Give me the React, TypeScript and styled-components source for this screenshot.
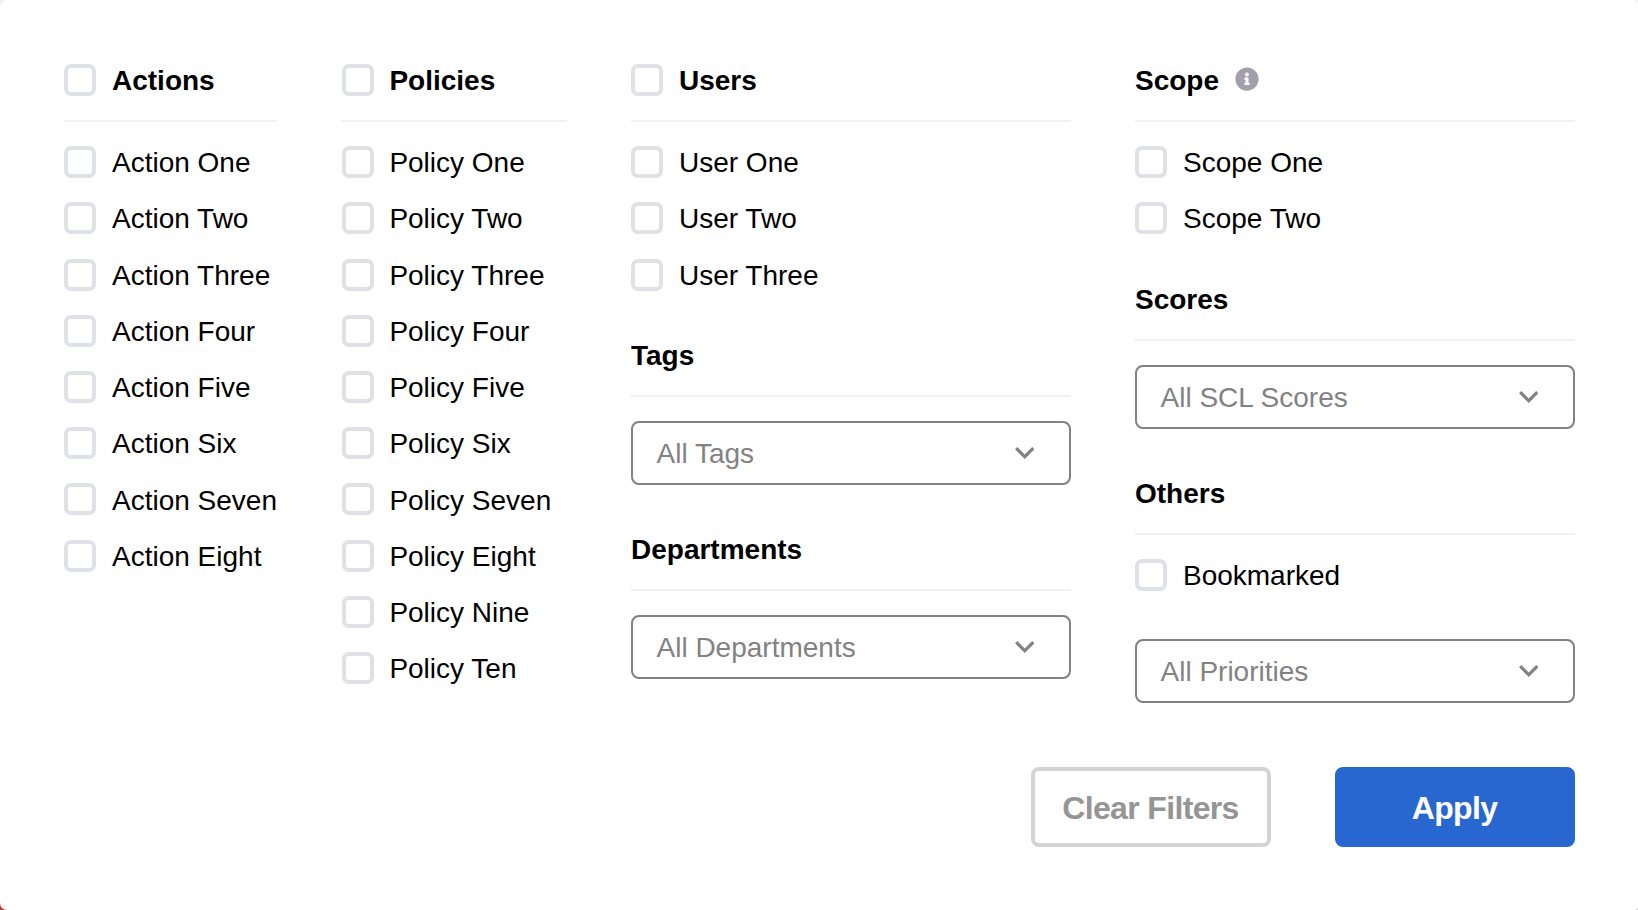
import React from "react";
import styled, { createGlobalStyle } from "styled-components";
import { FaInfoCircle } from "react-icons/fa";

const GlobalStyle = createGlobalStyle`
  *, *::before, *::after { box-sizing: border-box; }
  body {
    margin: 0;
    font-family: "Liberation Sans", Helvetica, Arial, sans-serif;
    color: #000;
    overflow: hidden;
  }
`;

const Backdrop = styled.div`
  height: 910px;
  background:
    linear-gradient(#c8403a, #c8403a) left bottom / 20px 20px no-repeat,
    linear-gradient(#c8c8c8, #c8c8c8) right bottom / 20px 20px no-repeat,
    #f0f0f0;
`;

const Panel = styled.main`
  display: flex;
  flex-direction: column;
  justify-content: space-between;
  height: 100%;
  padding: 64px 63px 63px 64px;
  background: #fff;
  border-radius: 8px 5px 4px 7px;
`;

const Columns = styled.div`
  display: grid;
  grid-template-columns: 213.4px 225.6px 440px 440px;
  column-gap: 64px;
  align-items: start;
`;

const Column = styled.div`
  display: flex;
  flex-direction: column;
  gap: 48px;
`;

const Group = styled.section`
  display: flex;
  flex-direction: column;
  gap: 24px;
`;

const GroupHeader = styled.header`
  display: flex;
  align-items: center;
  height: 58.1px;
  padding-bottom: 24px;
  border-bottom: 2px solid #f1f1f2;
`;

const Title = styled.h2`
  margin: 0;
  padding-top: 2px;
  font-size: 28px;
  line-height: 30px;
  font-weight: 700;
`;

const InfoIcon = styled(FaInfoCircle)`
  width: 24px;
  height: 24px;
  margin: -2px 0 0 16px;
  color: #a29eab;
`;

const Row = styled.label`
  display: flex;
  align-items: center;
  height: 32.22px;
  font-size: 28px;
  line-height: 30px;
  white-space: nowrap;
`;

const Label = styled.span`
  padding-top: 2px;
`;

const Checkbox = styled.input.attrs({ type: "checkbox" })`
  appearance: none;
  flex: none;
  align-self: flex-start;
  width: 32px;
  height: 32px;
  margin: 0 15.6px 0 0.4px;
  border: 4px solid #e0e1e6;
  border-radius: 7px;
  background: #fff;
`;

const SelectBox = styled.button<{ $spaced?: boolean }>`
  display: flex;
  align-items: center;
  justify-content: space-between;
  height: 64px;
  margin: ${(p) => (p.$spaced ? "24px" : "0")} 0 0;
  padding: 0 34.5px 0 23.5px;
  border: 2px solid #828282;
  border-radius: 8px;
  background: #fff;
  color: #828282;
  font: 28px/30px "Liberation Sans", Helvetica, Arial, sans-serif;
`;

const Footer = styled.footer`
  display: flex;
  justify-content: flex-end;
  gap: 64px;
`;

const Button = styled.button<{ $primary?: boolean }>`
  width: 240px;
  height: 80px;
  padding: 2px 1px 0 0;
  border: 4px solid ${(p) => (p.$primary ? "#2867d0" : "#d3d3d3")};
  border-radius: 8px;
  background: ${(p) => (p.$primary ? "#2867d0" : "#fff")};
  color: ${(p) => (p.$primary ? "#fff" : "#959595")};
  font: 700 32px/36px "Liberation Sans", Helvetica, Arial, sans-serif;
  letter-spacing: -0.65px;
`;

const Chevron = () => (
  <svg width="19.5" height="12" viewBox="6 8.59 12 7.41" aria-hidden="true">
    <path d="M16.59 8.59 12 13.17 7.41 8.59 6 10l6 6 6-6z" fill="currentColor" />
  </svg>
);

const Option = ({ label }: { label: string }) => (
  <Row>
    <Checkbox />
    <Label>{label}</Label>
  </Row>
);

const Select = ({ label, spaced }: { label: string; spaced?: boolean }) => (
  <SelectBox type="button" $spaced={spaced}>
    <Label>{label}</Label>
    <Chevron />
  </SelectBox>
);

interface FilterGroupProps {
  title: string;
  checkable?: boolean;
  info?: boolean;
  options?: string[];
  children?: React.ReactNode;
}

const FilterGroup = ({ title, checkable, info, options = [], children }: FilterGroupProps) => (
  <Group>
    <GroupHeader>
      {checkable && <Checkbox aria-label={title} />}
      <Title>{title}</Title>
      {info && <InfoIcon />}
    </GroupHeader>
    {options.map((label) => (
      <Option key={label} label={label} />
    ))}
    {children}
  </Group>
);

const numbers = ["One", "Two", "Three", "Four", "Five", "Six", "Seven", "Eight", "Nine", "Ten"];
const series = (name: string, count: number) => numbers.slice(0, count).map((n) => `${name} ${n}`);

export default function App() {
  return (
    <Backdrop>
      <GlobalStyle />
      <Panel>
        <Columns>
          <Column>
            <FilterGroup title="Actions" checkable options={series("Action", 8)} />
          </Column>
          <Column>
            <FilterGroup title="Policies" checkable options={series("Policy", 10)} />
          </Column>
          <Column>
            <FilterGroup title="Users" checkable options={series("User", 3)} />
            <FilterGroup title="Tags">
              <Select label="All Tags" />
            </FilterGroup>
            <FilterGroup title="Departments">
              <Select label="All Departments" />
            </FilterGroup>
          </Column>
          <Column>
            <FilterGroup title="Scope" info options={series("Scope", 2)} />
            <FilterGroup title="Scores">
              <Select label="All SCL Scores" />
            </FilterGroup>
            <FilterGroup title="Others" options={["Bookmarked"]}>
              <Select label="All Priorities" spaced />
            </FilterGroup>
          </Column>
        </Columns>
        <Footer>
          <Button type="button">Clear Filters</Button>
          <Button type="button" $primary>
            Apply
          </Button>
        </Footer>
      </Panel>
    </Backdrop>
  );
}
